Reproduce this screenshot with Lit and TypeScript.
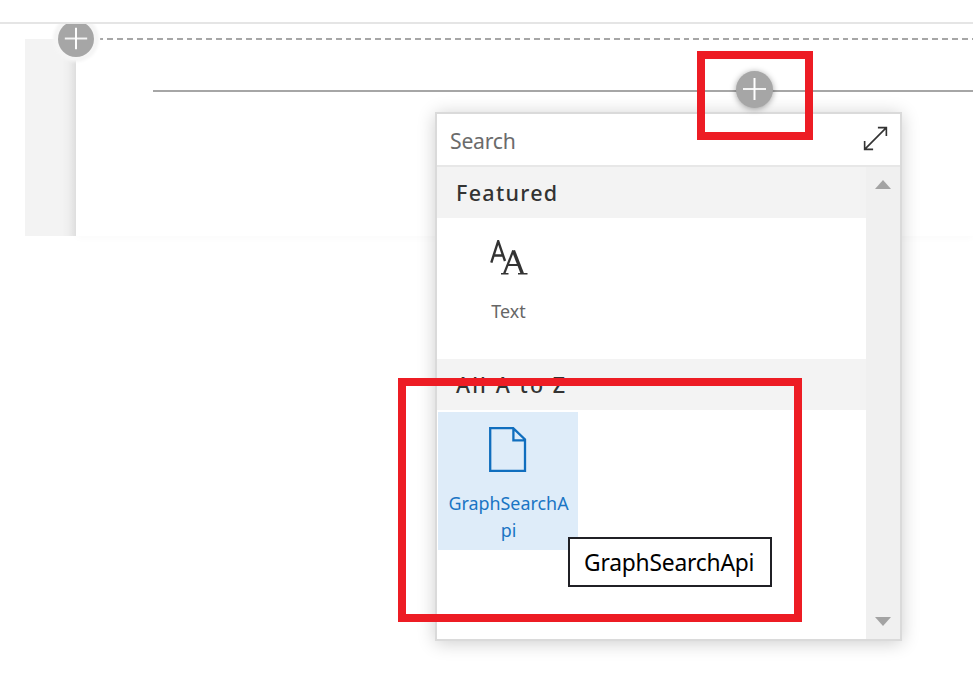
import { LitElement, html, css, svg } from "lit";
import { customElement, property } from "lit/decorators.js";

@customElement("add-button")
class AddButton extends LitElement {
  static styles = css`
    :host { display: block; width: 37px; height: 37px; border-radius: 50%; background: #a6a6a6; }
    svg { display: block; width: 100%; height: 100%; }
  `;
  render() {
    return html`<svg viewBox="0 0 37 37" aria-label="Add">
      <path d="M7 18H30" stroke="#f4f4f4" stroke-width="2" />
      <path d="M18.5 7V29" stroke="#fff" stroke-width="2" />
    </svg>`;
  }
}

const textIcon = svg`<svg viewBox="0 0 38 36" width="38" height="36" fill="none" stroke="#333">
  <path d="M1.3 22.6L8.2 1.2L15 21M3.8 15.5H13.5" stroke-width="2.4"/>
  <path d="M14.2 33.5L23.3 10.5" stroke-width="2.2"/>
  <path d="M23.4 10.5L32.3 33.5" stroke-width="3.4"/>
  <path d="M17 25H30" stroke-width="2"/>
  <path d="M11 33.8h7.5M28 33.8H37.5" stroke-width="1.5"/>
</svg>`;

const pageIcon = svg`<svg viewBox="0 0 38 46" width="38" height="46" fill="none" stroke="#106ebe" stroke-width="2.3">
  <path d="M1.2 1.2H24.2L36 12.4V43.8H1.2ZM24.4 1.2V13.4H36"/>
</svg>`;

@customElement("web-part")
class WebPart extends LitElement {
  @property() label = "";
  @property() icon = "";
  @property({ type: Boolean, reflect: true }) selected = false;
  static styles = css`
    :host { display: flex; flex-direction: column; align-items: center; box-sizing: border-box;
      width: 140px; height: 138px; padding: 15px 9px 0 10px; color: #666; }
    :host([selected]) { background: #deecf9; color: #1a75c4; }
    .icon { display: flex; height: 46px; }
    .icon svg { display: block; }
    .label { width: 121px; margin-top: 17px; font-size: 17.9px; line-height: 27px; text-align: center; word-break: break-all; }
    :host([selected]) .icon { margin-left: -2px; }
    .icon.glyph { padding-top: 5px; height: 41px; }
  `;
  render() {
    return html`<div class="icon ${this.icon === "text" ? "glyph" : ""}">${this.icon === "text" ? textIcon : pageIcon}</div>
      <div class="label">${this.label}</div>`;
  }
}

@customElement("app-root")
class AppRoot extends LitElement {
  static styles = css`
    :host { display: block; position: relative; width: 973px; height: 695px; overflow: hidden; background: #fff;
      font-family: "Noto Sans", "Open Sans", sans-serif; }
    .topbar { box-sizing: border-box; height: 24px; border-bottom: 2px solid #e5e5e5; }
    .stage { position: relative; height: 671px; overflow: hidden; }
    .page { display: flex; padding: 15px 0 0 25px; height: 197px; }
    .rail { width: 51px; background: #f3f3f3; }
    .canvas { position: relative; flex: 1; background: #fff; box-shadow: 0 2px 8px rgba(0,0,0,.025); }
    .edge { position: absolute; left: -14px; top: 0; width: 14px; height: 197px;
      background: linear-gradient(to right, rgba(0,0,0,0), rgba(0,0,0,.02) 45%, rgba(0,0,0,.08)); }
    .dashes { position: absolute; left: 24px; right: 0; top: -1px; height: 2px;
      background: repeating-linear-gradient(to right, #a6a6a6 0 3px, transparent 3px 7px, #a6a6a6 7px 9.94px); }
    .divider { margin: 51px 0 0 77px; height: 2px; background: #a6a6a6; }
    .add-section { position: absolute; left: 58px; top: -3px; width: 36px; height: 36px;
      box-shadow: 0 0 0 3px #f5f5f5, 0 0 3px 5px #f5f5f5; }
    .add-part { position: absolute; left: 736px; top: 71px; box-shadow: 0 1px 6px rgba(0,0,0,.38); z-index: 2; }
    .picker { position: absolute; left: 435px; top: 112px; width: 467px; height: 529px; box-sizing: border-box;
      border: 2px solid #dadada; background: #fff;
      box-shadow: 0 2px 17px rgba(0,0,0,.2); }
    .search { box-sizing: border-box; height: 53px; border-bottom: 2px solid #e7e7e7; display: flex; align-items: center;
      justify-content: space-between; padding: 2px 12px 0 13px; color: #6b6b6b; font-size: 21.2px; letter-spacing: -.25px; }
    .search svg { display: block; margin-top: -4px; }
    .body { display: flex; height: 472px; }
    .list { flex: 1; }
    .heading { box-sizing: border-box; height: 51px; padding: 0 0 0 19px; background: #f3f3f3; color: #333;
      font-size: 21.5px; line-height: 52px; font-weight: 500; letter-spacing: 1.3px; }
    .heading.all { letter-spacing: 2.1px; }
    .group { height: 141px; padding: 2px 0 0 1px; box-sizing: border-box; }
    .scroll { width: 34px; background: #f0f0f0; display: flex; flex-direction: column; align-items: center;
      justify-content: space-between; box-sizing: border-box; padding: 13px 0 13px; }
    .scroll svg { display: block; }
    .mark { position: absolute; box-sizing: border-box; border: 8px solid #ed1c24; z-index: 3; }
    .mark-add { left: 697px; top: 51px; width: 116px; height: 89px; }
    .mark-part { left: 398px; top: 378px; width: 404px; height: 244px; }
    .tooltip { position: absolute; left: 568px; top: 537px; width: 204px; height: 50px; box-sizing: border-box;
      border: 2px solid #202025; background: #fff; color: #000; font-size: 22.8px; line-height: 47px;
      letter-spacing: -.2px; padding-left: 14px; white-space: nowrap; z-index: 4; }
  `;
  render() {
    return html`
      <div class="topbar"></div>
      <div class="stage">
        <div class="page">
          <div class="rail"></div>
          <div class="canvas">
            <div class="edge"></div>
            <div class="dashes"></div>
            <div class="divider"></div>
          </div>
        </div>
        <add-button class="add-section"></add-button>
      </div>
      <div class="picker">
        <div class="search">
          <span>Search</span>
          <svg width="25" height="25" viewBox="0 0 26 26" fill="none" stroke="#333" stroke-width="1.7">
            <path d="M2 24L24 2M15.5 1.7H24.3V10.5M1.7 15.5V24.3H10.5"/>
          </svg>
        </div>
        <div class="body">
          <div class="list">
            <div class="heading">Featured</div>
            <div class="group"><web-part icon="text" label="Text"></web-part></div>
            <div class="heading all">All A to Z</div>
            <div class="group"><web-part icon="page" label="GraphSearchApi" selected></web-part></div>
          </div>
          <div class="scroll">
            <svg width="16" height="9"><path d="M8 0L16 9H0Z" fill="#a3a3a3"/></svg>
            <svg width="16" height="9"><path d="M0 0H16L8 9Z" fill="#a3a3a3"/></svg>
          </div>
        </div>
      </div>
      <add-button class="add-part"></add-button>
      <div class="mark mark-add"></div>
      <div class="mark mark-part"></div>
      <div class="tooltip">GraphSearchApi</div>
    `;
  }
}
